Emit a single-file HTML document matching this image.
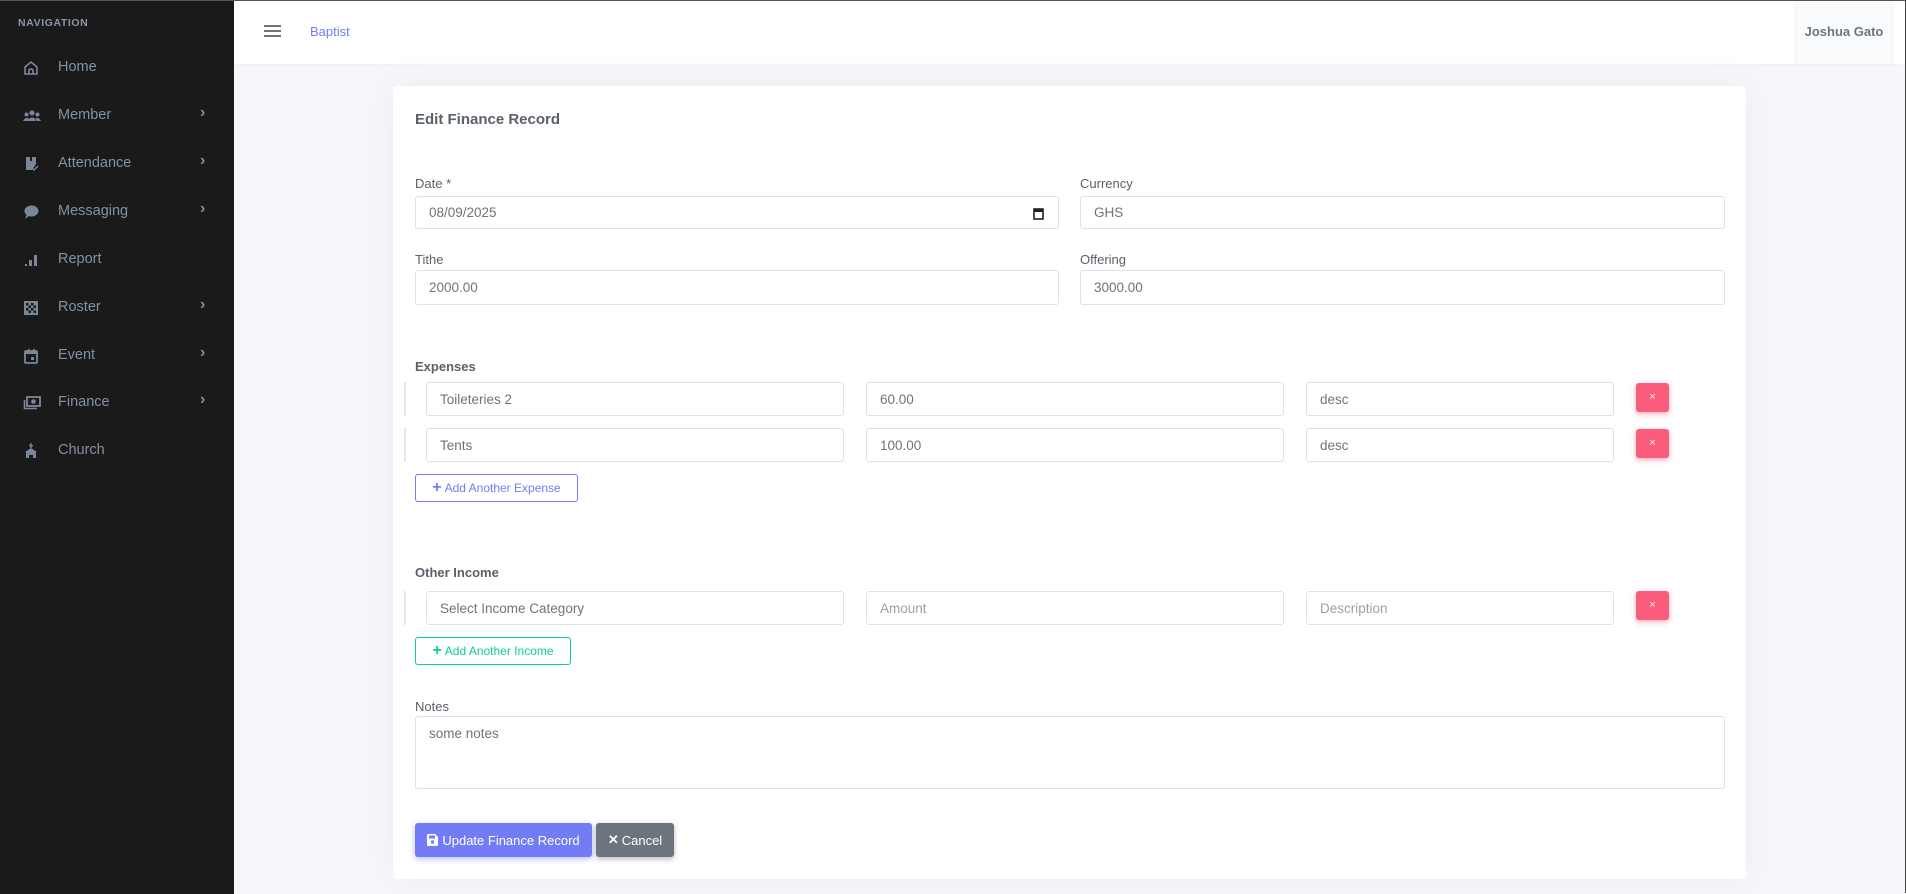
<!DOCTYPE html>
<html><head><meta charset="utf-8"><style>
*{box-sizing:border-box;margin:0;padding:0}
body{width:1906px;height:893px;overflow:hidden;background:#f6f7fb;font-family:"Liberation Sans",sans-serif;position:relative;border-top:1px solid #555;border-right:1px solid #444}
.a{position:absolute}
#side{left:0;top:0;width:234px;height:893px;background:#1a1a1b}
.nav{position:absolute;left:0;width:234px;height:20px;color:#8391a2;font-size:14.5px}
.nav svg{position:absolute;left:23px;top:2px}
.nav span{position:absolute;left:58px;top:1px}
.nav .ch{position:absolute;left:200px;top:-2px;font-size:16px}
#hdr{left:234px;top:0;width:1671px;height:63px;background:#fff;box-shadow:0 1px 3px rgba(0,0,0,.03)}
#card{left:393px;top:85px;width:1353px;height:793px;background:#fff;border-radius:4px;box-shadow:0 0 35px rgba(154,161,171,.12)}
.lbl{position:absolute;color:#5a6169;font-size:13px}
.b{font-weight:bold}
.in{position:absolute;border:1px solid #dee2e6;border-radius:3px;background:#fff;color:#6c757d;font-size:13.5px;padding-left:13px;display:flex;align-items:center}
.ph{color:#98a1ab}
.bar{position:absolute;left:404px;width:2px;background:#e3e6ea}
.x{position:absolute;width:33px;height:29px;background:#fa5c7c;border-radius:3px;color:#fff;font-size:11px;text-align:center;line-height:28px;box-shadow:0 2px 6px rgba(250,92,124,.5)}
.btn{position:absolute;border-radius:3px;font-size:12px;display:flex;align-items:center;justify-content:center}
</style></head><body>
<div id="side" class="a">
<div class="a" style="left:18px;top:16px;color:#8a96a8;font-size:10.5px;font-weight:bold;letter-spacing:.6px">NAVIGATION</div>
<div class="nav" style="top:57px"><svg width="16" height="16" viewBox="0 0 16 16"><path d="M2 7 L8 2 L14 7 V14 H2 Z M6 14 V10 Q8 8 10 10 V14" fill="none" stroke="#7b8799" stroke-width="1.6"/></svg><span>Home</span></div>
<div class="nav" style="top:105px"><svg width="18" height="16" viewBox="0 0 18 16"><circle cx="9" cy="5" r="2.5" fill="#7b8799"/><circle cx="3.5" cy="6.5" r="2" fill="#7b8799"/><circle cx="14.5" cy="6.5" r="2" fill="#7b8799"/><path d="M4 13 Q9 6 14 13Z M0 13 Q3 8 6 11 L5 13Z M18 13 Q15 8 12 11 L13 13Z" fill="#7b8799"/></svg><span>Member</span><b class="ch">›</b></div>
<div class="nav" style="top:153px"><svg width="16" height="16" viewBox="0 0 16 16"><path d="M3 1 H7 V5 H9 V1 H13 V8 L9 14 H3 Z" fill="#7b8799"/><path d="M9 12 L11 14 L15 10" stroke="#7b8799" stroke-width="1.4" fill="none"/></svg><span>Attendance</span><b class="ch">›</b></div>
<div class="nav" style="top:201px"><svg width="16" height="16" viewBox="0 0 16 16"><ellipse cx="8.5" cy="7" rx="7" ry="5.5" fill="#7b8799"/><path d="M2 15 L4 10 L6 12Z" fill="#7b8799"/></svg><span>Messaging</span><b class="ch">›</b></div>
<div class="nav" style="top:249px"><svg width="16" height="16" viewBox="0 0 16 16"><rect x="2" y="12" width="2" height="2" fill="#7b8799"/><rect x="6" y="8" width="3" height="6" fill="#7b8799"/><rect x="11" y="3" width="3" height="11" fill="#7b8799"/></svg><span>Report</span></div>
<div class="nav" style="top:297px"><svg width="16" height="16" viewBox="0 0 16 16"><rect x="1" y="1" width="14" height="14" fill="#7b8799"/><g fill="#1a1a1b"><rect x="3" y="3" width="2.5" height="2.5"/><rect x="8" y="3" width="2.5" height="2.5"/><rect x="5.5" y="5.5" width="2.5" height="2.5"/><rect x="10.5" y="5.5" width="2.5" height="2.5"/><rect x="3" y="8" width="2.5" height="2.5"/><rect x="8" y="8" width="2.5" height="2.5"/><rect x="5.5" y="10.5" width="2.5" height="2.5"/><rect x="10.5" y="10.5" width="2.5" height="2.5"/></g></svg><span>Roster</span><b class="ch">›</b></div>
<div class="nav" style="top:345px"><svg width="16" height="16" viewBox="0 0 16 16"><rect x="2" y="3" width="12" height="12" rx="1" fill="none" stroke="#7b8799" stroke-width="1.8"/><rect x="2" y="3" width="12" height="3" fill="#7b8799"/><rect x="5" y="1" width="1.6" height="3" fill="#7b8799"/><rect x="10" y="1" width="1.6" height="3" fill="#7b8799"/><rect x="8" y="9" width="3" height="3" fill="#7b8799"/></svg><span>Event</span><b class="ch">›</b></div>
<div class="nav" style="top:392px"><svg width="18" height="16" viewBox="0 0 18 16"><rect x="4" y="2" width="13" height="9" fill="none" stroke="#7b8799" stroke-width="1.8"/><circle cx="10.5" cy="6.5" r="2.3" fill="#7b8799"/><path d="M1.5 5 V13.5 H14" fill="none" stroke="#7b8799" stroke-width="1.6"/></svg><span>Finance</span><b class="ch">›</b></div>
<div class="nav" style="top:440px"><svg width="16" height="16" viewBox="0 0 16 16"><path d="M7.3 0 H8.7 V2 H10 V3.2 H8.7 V5 H7.3 V3.2 H6 V2 H7.3Z M8 5 L14 9 H2Z M3 9 H13 V15 H10 V12 H6 V15 H3Z" fill="#7b8799"/></svg><span>Church</span></div>
</div>
<div id="hdr" class="a">
<div class="a" style="left:30px;top:24px;width:17px;height:2px;background:#6c757d;box-shadow:0 5px 0 #6c757d,0 10px 0 #6c757d"></div>
<div class="a" style="left:76px;top:23px;color:#727cf5;font-size:13px">Baptist</div>
<div class="a" style="left:1561px;top:0;width:98px;height:63px;background:#fafbfd;border-left:1px solid #f1f3fa;border-right:1px solid #f1f3fa;color:#6c757d;font-size:13px;font-weight:bold;text-align:center;line-height:62px">Joshua Gato</div>
</div>
<div id="card" class="a"></div>
<div class="lbl b" style="left:415px;top:110px;font-size:15px">Edit Finance Record</div>
<div class="lbl" style="left:415px;top:175px">Date *</div>
<div class="in" style="left:415px;top:195px;width:644px;height:33px">08/09/2025<svg style="position:absolute;right:14px;top:10px" width="11" height="13" viewBox="0 0 11 13"><rect x="1" y="2" width="9" height="10" fill="none" stroke="#222" stroke-width="1.6"/><rect x="1" y="2" width="9" height="3" fill="#222"/></svg></div>
<div class="lbl" style="left:1080px;top:175px">Currency</div>
<div class="in" style="left:1080px;top:195px;width:645px;height:33px">GHS</div>
<div class="lbl" style="left:415px;top:251px">Tithe</div>
<div class="in" style="left:415px;top:269px;width:644px;height:35px">2000.00</div>
<div class="lbl" style="left:1080px;top:251px">Offering</div>
<div class="in" style="left:1080px;top:269px;width:645px;height:35px">3000.00</div>
<div class="lbl b" style="left:415px;top:358px">Expenses</div>
<div class="bar" style="top:381px;height:34px"></div>
<div class="in" style="left:426px;top:381px;width:418px;height:34px">Toileteries 2</div>
<div class="in" style="left:866px;top:381px;width:418px;height:34px">60.00</div>
<div class="in" style="left:1306px;top:381px;width:308px;height:34px">desc</div>
<div class="x" style="left:1636px;top:382px">×</div>
<div class="bar" style="top:427px;height:34px"></div>
<div class="in" style="left:426px;top:427px;width:418px;height:34px">Tents</div>
<div class="in" style="left:866px;top:427px;width:418px;height:34px">100.00</div>
<div class="in" style="left:1306px;top:427px;width:308px;height:34px">desc</div>
<div class="x" style="left:1636px;top:428px">×</div>
<div class="btn" style="left:415px;top:473px;width:163px;height:28px;border:1px solid #727cf5;color:#727cf5"><b style="font-size:16px;margin-right:3px">+</b>Add Another Expense</div>
<div class="lbl b" style="left:415px;top:564px">Other Income</div>
<div class="bar" style="top:590px;height:34px"></div>
<div class="in" style="left:426px;top:590px;width:418px;height:34px">Select Income Category</div>
<div class="in ph" style="left:866px;top:590px;width:418px;height:34px">Amount</div>
<div class="in ph" style="left:1306px;top:590px;width:308px;height:34px">Description</div>
<div class="x" style="left:1636px;top:590px">×</div>
<div class="btn" style="left:415px;top:636px;width:156px;height:28px;border:1px solid #0acf97;color:#0acf97"><b style="font-size:16px;margin-right:3px">+</b>Add Another Income</div>
<div class="lbl" style="left:415px;top:698px">Notes</div>
<div class="in" style="left:415px;top:715px;width:1310px;height:73px;align-items:flex-start;padding-top:9px">some notes</div>
<div class="btn" style="left:415px;top:822px;width:177px;height:34px;background:#727cf5;color:#fff;font-size:13px;box-shadow:0 2px 6px rgba(114,124,245,.5)"><svg width="11" height="12" viewBox="0 0 11 12" style="margin-right:4px"><path d="M0 1 Q0 0 1 0 H8 L11 3 V11 Q11 12 10 12 H1 Q0 12 0 11Z" fill="#fff"/><rect x="2" y="1.5" width="6" height="3" fill="#727cf5"/><circle cx="5.5" cy="8" r="1.7" fill="#727cf5"/></svg>Update Finance Record</div>
<div class="btn" style="left:596px;top:822px;width:78px;height:34px;background:#6c757d;color:#fff;font-size:13px;box-shadow:0 2px 6px rgba(108,117,125,.5)"><b style="margin-right:3px">✕</b>Cancel</div>
</body></html>
